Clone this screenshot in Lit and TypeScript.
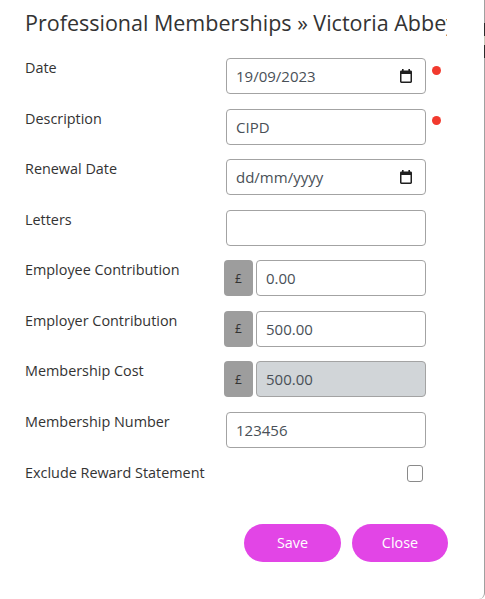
import { LitElement, html, css, svg } from "lit";
import { customElement } from "lit/decorators.js";

const calendar = svg`<svg class="cal" width="14" height="14" viewBox="0 0 14 14"><path fill="#1f1f1f" d="M3 0h1.6v1.6h4.8V0H11v1.6h.6c.9 0 1.4.6 1.4 1.4v9.6c0 .8-.6 1.4-1.4 1.4H2.400c-.8 0-1.400-.6-1.400-1.400V3c0-.8.5-1.400 1.400-1.400H3zM2.500 5v7.500h9V5z"/></svg>`;

type Row = { label: string; kind: "date" | "text" | "money" | "check"; value?: string; required?: boolean; disabled?: boolean };

const rows: Row[] = [
  { label: "Date", kind: "date", value: "19/09/2023", required: true },
  { label: "Description", kind: "text", value: "CIPD", required: true },
  { label: "Renewal Date", kind: "date", value: "dd/mm/yyyy" },
  { label: "Letters", kind: "text", value: "" },
  { label: "Employee Contribution", kind: "money", value: "0.00" },
  { label: "Employer Contribution", kind: "money", value: "500.00" },
  { label: "Membership Cost", kind: "money", value: "500.00", disabled: true },
  { label: "Membership Number", kind: "text", value: "123456" },
  { label: "Exclude Reward Statement", kind: "check" },
];

@customElement("app-root")
export class AppRoot extends LitElement {
  static styles = css`
    :host {
      display: block;
      width: 485px;
      height: 599px;
      overflow: hidden;
      font-family: "Open Sans", sans-serif;
      color: #333;
    }
    .modal {
      position: relative;
      box-sizing: border-box;
      width: 485px;
      height: 599px;
      background: #fff;
      border-right: 1px solid #a0a0a0;
      border-bottom-right-radius: 6px;
      padding: 6.6px 37px 0 25px;
    }
    .edge {
      position: absolute;
      top: 23px;
      right: -1px;
      width: 1px;
      height: 35px;
      background: linear-gradient(#2b2b2b 0 13px, #c8c8b8 13px 22px, #2b2b2b 22px);
    }
    h1 {
      margin: 0;
      height: 31px;
      font-size: 21.5px;
      line-height: 31px;
      font-weight: 500;
      color: #333;
      white-space: nowrap;
      overflow: hidden;
    }
    form {
      margin-top: 20.6px;
      display: grid;
      grid-auto-rows: 36px;
      row-gap: 14.5px;
    }
    .row {
      display: grid;
      grid-template-columns: 201px 200px 1fr;
      align-items: start;
    }
    label {
      font-size: 14.4px;
      line-height: 19px;
      margin-top: -0.1px;
      color: #333;
    }
    label.last { margin-top: 0.8px; }
    .field {
      box-sizing: border-box;
      height: 36px;
      border: 1px solid #a3a3a3;
      border-radius: 4px;
      display: flex;
      align-items: center;
      justify-content: space-between;
      padding: 0 12px 0 9px;
      font-size: 15px;
      color: #495057;
      background: #fff;
      flex: 1;
    }
    .field.off { background: #d1d5d8; }
    .money { display: flex; gap: 3px; margin-left: -2px; }
    .cur {
      width: 29px;
      height: 36px;
      background: #9d9d9d;
      border-radius: 4px;
      display: flex;
      align-items: center;
      justify-content: center;
      font-size: 12px;
      color: #333;
    }
    .dot {
      width: 9px;
      height: 9px;
      border-radius: 50%;
      background: #f23a2e;
      margin: 7.5px 0 0 5.5px;
    }
    .check {
      justify-self: end;
      box-sizing: border-box;
      width: 16px;
      height: 17px;
      border: 1px solid #8a8a8a;
      border-radius: 3px;
      margin: 3px 3px 0 0;
      background: #fff;
    }
    .actions {
      display: flex;
      justify-content: flex-end;
      gap: 11px;
      margin: 25.6px -1px 0 0;
    }
    button {
      width: 97px;
      height: 38px;
      border: 0;
      border-radius: 19px;
      background: #e245e6;
      color: #fff;
      font: 14.4px "Open Sans", sans-serif;
    }
    button.close { width: 96px; }
  `;

  private renderControl(r: Row) {
    if (r.kind === "check") return html`<div class="check"></div>`;
    if (r.kind === "money")
      return html`<div class="money"><div class="cur">£</div><div class="field ${r.disabled ? "off" : ""}">${r.value}</div></div>`;
    return html`<div class="field">${r.value}${r.kind === "date" ? calendar : ""}</div>`;
  }

  render() {
    return html`<div class="modal">
      <div class="edge"></div>
      <h1>Professional Memberships » Victoria Abbey</h1>
      <form>
        ${rows.map(
          (r) => html`<div class="row">
            <label class="${r.kind === "check" ? "last" : ""}">${r.label}</label>
            ${this.renderControl(r)}
            ${r.required ? html`<span class="dot"></span>` : ""}
          </div>`
        )}
      </form>
      <div class="actions"><button>Save</button><button class="close">Close</button></div>
    </div>`;
  }
}
